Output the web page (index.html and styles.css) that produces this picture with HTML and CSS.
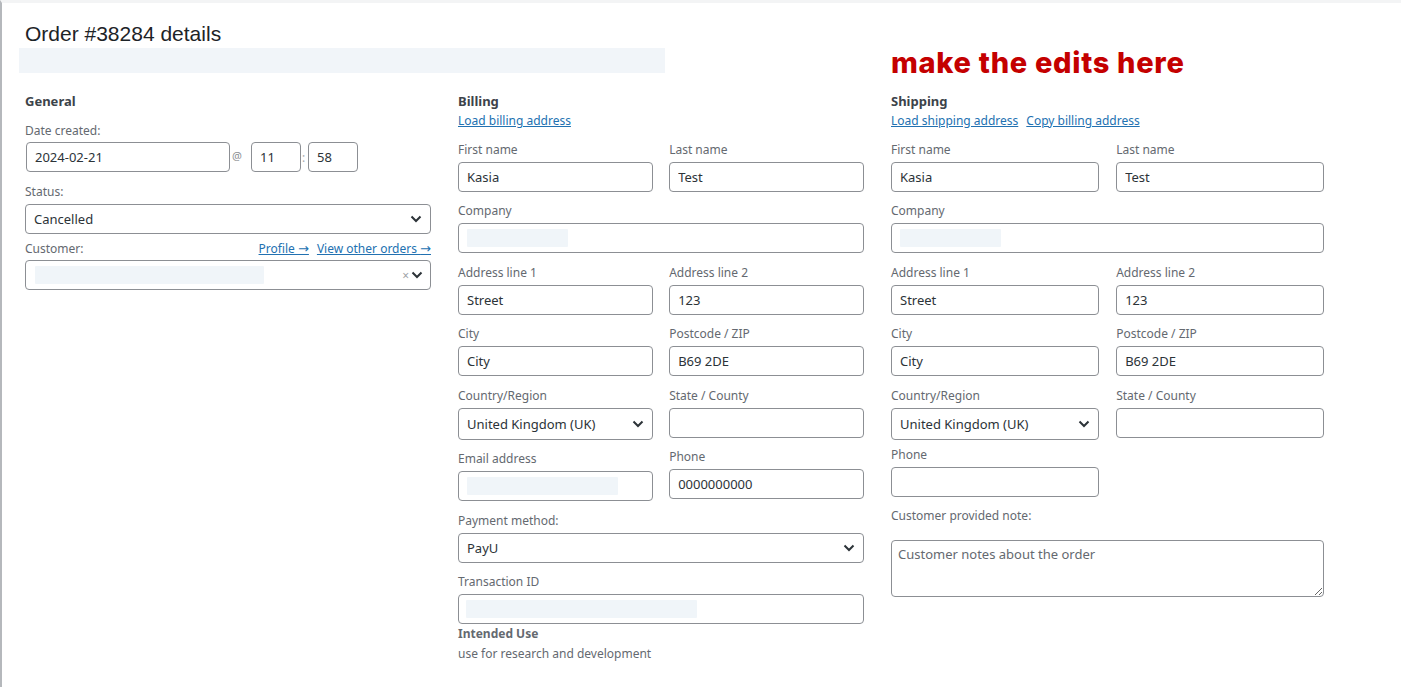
FILE: index.html
```html
<!DOCTYPE html>
<html lang="en">
<head>
<meta charset="utf-8">
<title>Order #38284 details</title>
<link rel="stylesheet" href="styles.css">
</head>
<body>
<div class="page">
  <h2 class="order-title">Order #38284 details</h2>
  <div class="meta-row">
    <div class="meta-bar"></div>
    <div class="edit-note">make the edits here</div>
  </div>

  <div class="order-data">
    <!-- General -->
    <section class="col">
      <h3 class="col-title">General</h3>
      <div class="gen-field first">
        <label class="lbl">Date created:</label>
        <div class="date-row">
          <input class="inp date" type="text" value="2024-02-21">
          <span class="at">@</span>
          <input class="inp time" type="text" value="11">
          <span class="colon">:</span>
          <input class="inp time" type="text" value="58">
        </div>
      </div>
      <div class="gen-field">
        <label class="lbl">Status:</label>
        <div class="sel">
          <span class="sel-text">Cancelled</span>
          <svg class="chev" viewBox="0 0 12 8"><path d="M1.5 1.5l4.5 4.5 4.5-4.5"/></svg>
        </div>
      </div>
      <div class="gen-field customer">
        <div class="cust-head">
          <label class="lbl">Customer:</label>
          <div class="cust-links"><a href="#">Profile <span class="arrow">→</span></a><a href="#">View other orders <span class="arrow">→</span></a></div>
        </div>
        <div class="sel cust-sel">
          <span class="blank cust-blank"></span>
          <span class="clear">×</span>
          <svg class="chev" viewBox="0 0 12 8"><path d="M1.5 1.5l4.5 4.5 4.5-4.5"/></svg>
        </div>
      </div>
    </section>

    <!-- Billing -->
    <section class="col">
      <h3 class="col-title">Billing</h3>
      <div class="links"><a href="#">Load billing address</a></div>
      <div class="pair">
        <div class="field"><label class="lbl">First name</label><input class="inp" type="text" value="Kasia"></div>
        <div class="field"><label class="lbl">Last name</label><input class="inp" type="text" value="Test"></div>
      </div>
      <div class="field"><label class="lbl">Company</label><div class="inp box"><span class="blank company-blank"></span></div></div>
      <div class="pair">
        <div class="stack">
          <div class="field"><label class="lbl">Address line 1</label><input class="inp" type="text" value="Street"></div>
          <div class="field"><label class="lbl">City</label><input class="inp" type="text" value="City"></div>
          <div class="field"><label class="lbl">Country/Region</label>
            <div class="sel tall"><span class="sel-text">United Kingdom (UK)</span><svg class="chev" viewBox="0 0 12 8"><path d="M1.5 1.5l4.5 4.5 4.5-4.5"/></svg></div>
          </div>
          <div class="field"><label class="lbl">Email address</label><div class="inp box"><span class="blank email-blank"></span></div></div>
        </div>
        <div class="stack">
          <div class="field"><label class="lbl">Address line 2</label><input class="inp" type="text" value="123"></div>
          <div class="field"><label class="lbl">Postcode / ZIP</label><input class="inp" type="text" value="B69 2DE"></div>
          <div class="field"><label class="lbl">State / County</label><input class="inp" type="text" value=""></div>
          <div class="field"><label class="lbl">Phone</label><input class="inp" type="text" value="0000000000"></div>
        </div>
      </div>
      <div class="field"><label class="lbl">Payment method:</label>
        <div class="sel"><span class="sel-text">PayU</span><svg class="chev" viewBox="0 0 12 8"><path d="M1.5 1.5l4.5 4.5 4.5-4.5"/></svg></div>
      </div>
      <div class="field"><label class="lbl">Transaction ID</label><div class="inp box"><span class="blank txn-blank"></span></div></div>
      <div class="extra">
        <div class="extra-title">Intended Use</div>
        <div class="extra-text">use for research and development</div>
      </div>
    </section>

    <!-- Shipping -->
    <section class="col">
      <h3 class="col-title">Shipping</h3>
      <div class="links"><a href="#">Load shipping address</a><a href="#">Copy billing address</a></div>
      <div class="pair">
        <div class="field"><label class="lbl">First name</label><input class="inp" type="text" value="Kasia"></div>
        <div class="field"><label class="lbl">Last name</label><input class="inp" type="text" value="Test"></div>
      </div>
      <div class="field"><label class="lbl">Company</label><div class="inp box"><span class="blank company-blank"></span></div></div>
      <div class="pair">
        <div class="stack">
          <div class="field"><label class="lbl">Address line 1</label><input class="inp" type="text" value="Street"></div>
          <div class="field"><label class="lbl">City</label><input class="inp" type="text" value="City"></div>
          <div class="field"><label class="lbl">Country/Region</label>
            <div class="sel tall"><span class="sel-text">United Kingdom (UK)</span><svg class="chev" viewBox="0 0 12 8"><path d="M1.5 1.5l4.5 4.5 4.5-4.5"/></svg></div>
          </div>
          <div class="field close"><label class="lbl">Phone</label><input class="inp" type="text" value=""></div>
        </div>
        <div class="stack">
          <div class="field"><label class="lbl">Address line 2</label><input class="inp" type="text" value="123"></div>
          <div class="field"><label class="lbl">Postcode / ZIP</label><input class="inp" type="text" value="B69 2DE"></div>
          <div class="field"><label class="lbl">State / County</label><input class="inp" type="text" value=""></div>
        </div>
      </div>
      <div class="field note-field"><label class="lbl">Customer provided note:</label>
        <textarea class="note" placeholder="Customer notes about the order"></textarea>
      </div>
    </section>
  </div>
</div>
</body>
</html>
```

FILE: styles.css
```css
* { box-sizing: border-box; }

html, body {
  margin: 0;
  background: #fff;
}

body {
  font-family: "Noto Sans", "Open Sans", sans-serif;
  color: #2c3338;
}

.page {
  min-height: 100vh;
  border-left: 2px solid #b5b8bc;
  border-top: 3px solid #f3f4f5;
  padding-left: 23px;
}

.order-title {
  margin: 18px 0 2px;
  font-family: "Liberation Sans", Arial, sans-serif;
  font-weight: 400;
  font-size: 21px;
  line-height: 25px;
  color: #1d2327;
}

.meta-row {
  display: flex;
  align-items: center;
  height: 25px;
}

.meta-bar {
  margin-left: -6px;
  width: 646px;
  height: 25px;
  background: #f1f5f9;
}

.edit-note {
  margin-left: 226px;
  margin-top: 3px;
  font-family: Inter, "Noto Sans", sans-serif;
  font-weight: 800;
  font-size: 29px;
  letter-spacing: 0.7px;
  line-height: 25px;
  color: #c40000;
  white-space: nowrap;
}

.order-data {
  display: grid;
  grid-template-columns: 406px 406px 433px;
  column-gap: 27px;
  margin-top: 19px;
}

.col-title {
  margin: 0;
  font-size: 13px;
  line-height: 18px;
  font-weight: 700;
  color: #3c434a;
}

.lbl {
  display: block;
  font-size: 12px;
  line-height: 17px;
  color: #646970;
}

a {
  color: #2271b1;
  text-decoration: underline;
}

.arrow {
  font-family: "DejaVu Sans", sans-serif;
  font-size: 13px;
  line-height: 1;
}

.links {
  margin-top: 2px;
  display: flex;
  gap: 8px;
  font-size: 12px;
  line-height: 17px;
}

/* inputs */
.inp {
  display: block;
  width: 100%;
  height: 30px;
  margin: 0;
  padding: 0 8px;
  border: 1px solid #8c8f94;
  border-radius: 4px;
  background: #fff;
  font-family: "Noto Sans", "Open Sans", sans-serif;
  font-size: 13px;
  color: #2c3338;
  outline: none;
}

.box {
  display: flex;
  align-items: center;
}

.blank {
  display: block;
  height: 18px;
  background: #f0f5f9;
  border-radius: 1px;
}

.company-blank { width: 101px; }
.email-blank { width: 151px; }
.txn-blank { width: 231px; margin-left: -1px; }

.sel {
  display: flex;
  align-items: center;
  height: 30px;
  padding: 0 8px;
  border: 1px solid #8c8f94;
  border-radius: 4px;
  background: #fff;
  font-size: 13px;
  color: #2c3338;
}

.sel.tall { height: 32px; }

.sel-text { flex: 1; }

.chev {
  width: 12px;
  height: 8px;
  fill: none;
  stroke: #2c3338;
  stroke-width: 2;
}

/* general column */
.gen-field { margin-top: 11px; }
.gen-field.first { margin-top: 12px; }
.gen-field .lbl { margin-bottom: 4px; }
.gen-field.first .lbl { margin-bottom: 3px; }
.gen-field.customer { margin-top: 6px; }

.date-row {
  display: flex;
  align-items: center;
}

.date-row .date {
  margin-left: 1px;
  width: 204px;
}

.at {
  width: 21px;
  padding-left: 2px;
  margin-top: -4px;
  font-size: 11px;
  color: #8c8f94;
}

.colon {
  width: 7px;
  padding-left: 1px;
  font-size: 12px;
  color: #a7aaad;
}

.date-row .time { width: 50px; }

.cust-head {
  display: flex;
  justify-content: space-between;
  align-items: baseline;
  margin-bottom: 3px;
}

.cust-head .lbl { margin: 0; }

.cust-links {
  display: flex;
  gap: 8px;
  font-size: 12px;
  line-height: 17px;
}

.cust-sel { padding-left: 9px; padding-right: 7px; }

.cust-blank { width: 229px; flex: none; }

.clear {
  margin-left: auto;
  margin-right: 2px;
  font-size: 12px;
  color: #a0a3a7;
}

/* address columns */
.field { margin-top: 10.5px; }
.field .lbl { margin-bottom: 4px; }

.pair {
  display: flex;
  justify-content: space-between;
  align-items: flex-start;
}

.pair > .field,
.pair > .stack {
  width: 48%;
}

.col > .links + .pair > .field { margin-top: 11.5px; }

.field.close { margin-top: 6px; }

.extra { margin-top: 1px; }

.extra-title {
  font-size: 12px;
  line-height: 17px;
  font-weight: 700;
  color: #646970;
}

.extra-text {
  margin-top: 3px;
  font-size: 12px;
  line-height: 17px;
  color: #646970;
}

.note-field { margin-top: 10px; }
.note-field .lbl { margin-bottom: 16.5px; }

.note {
  display: block;
  width: 100%;
  height: 57px;
  padding: 4px 6px;
  border: 1px solid #8c8f94;
  border-radius: 4px;
  font-family: "Noto Sans", "Open Sans", sans-serif;
  font-size: 13px;
  line-height: 18px;
  color: #2c3338;
  outline: none;
}

.note::placeholder { color: #646970; }
```
